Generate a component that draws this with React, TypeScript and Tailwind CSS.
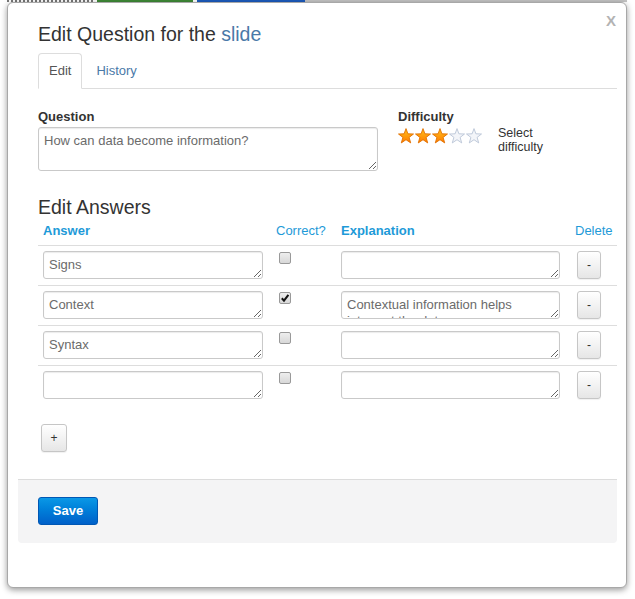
import { useState } from "react";

const answers = [
  { answer: "Signs", correct: false, explanation: "" },
  { answer: "Context", correct: true, explanation: "Contextual information helps interpret the data." },
  { answer: "Syntax", correct: false, explanation: "" },
  { answer: "", correct: false, explanation: "" },
];

const starPoints =
  "8,0.6 9.9,5.8 15.5,6 11.1,9.4 12.7,14.9 8,11.7 3.3,14.9 4.9,9.4 0.5,6 6.1,5.8";

const Star = ({ filled, id }: { filled: boolean; id: number }) => (
  <svg width="16" height="16" viewBox="0 0 16 16">
    <defs>
      <linearGradient id={`star-${id}`} x1="0" y1="0" x2="0" y2="1">
        <stop offset="0" stopColor="#ffc21a" />
        <stop offset="1" stopColor="#ff7a00" />
      </linearGradient>
    </defs>
    <polygon
      points={starPoints}
      fill={filled ? `url(#star-${id})` : "#f3f5f9"}
      stroke={filled ? "#e06f00" : "#b9c4d6"}
      strokeWidth="0.9"
      strokeLinejoin="round"
    />
  </svg>
);

const Checkbox = ({ checked }: { checked: boolean }) => (
  <span className="relative block h-[12px] w-[12px] rounded-[2px] border border-[#999] bg-gradient-to-b from-[#eeeeee] to-[#d8d8d8]">
    {checked && (
      <svg className="absolute left-0 top-0" width="10" height="10" viewBox="0 0 10 10">
        <path d="M1.8 5.2 L4 7.6 L8.4 1.9" fill="none" stroke="#111" strokeWidth="2" />
      </svg>
    )}
  </span>
);

const Field = ({ value, className }: { value: string; className: string }) => (
  <textarea
    readOnly
    value={value}
    className={`block resize-y overflow-hidden rounded-[3px] border border-[#c9c9c9] bg-white px-[5px] py-[5px] text-[13px] leading-[16px] text-[#6b6b6b] shadow-[inset_0_1px_1px_rgba(0,0,0,0.08)] outline-none ${className}`}
  />
);

const SmallButton = ({ label, className }: { label: string; className: string }) => (
  <button className={`flex items-center justify-center rounded-[3px] border border-[#c6c6c6] bg-gradient-to-b from-white to-[#e6e6e6] text-[12px] text-[#333] shadow-[0_1px_1px_rgba(0,0,0,0.06)] ${className}`}>
    {label}
  </button>
);

export default function App() {
  const [tab, setTab] = useState("edit");
  const [rating] = useState(3);

  return (
    <div className="min-h-[599px] bg-white font-['Liberation_Sans',Arial,sans-serif] text-[13px] text-[#333]">
      {/* page behind the modal */}
      <div className="flex h-[2px] pl-[7px]">
        <div className="w-[86px] border-t-2 border-dotted border-[#777]" />
        <div className="ml-[4px] w-[96px] bg-[#3f8a38]" />
        <div className="ml-[4px] w-[108px] bg-[#1c5bbd]" />
        <div className="w-[322px] bg-[#c4c4c4]" />
      </div>

      <div className="relative ml-[7px] h-[586px] w-[620px] rounded-[6px] border border-[#a8a8a8] bg-white pl-[10px] pr-[9px] shadow-[0_2px_6px_rgba(0,0,0,0.4)]">
        <span className="absolute right-[10px] top-[10px] text-[15px] font-bold leading-[16px] text-[#b3b3b3]">X</span>

        <div className="pl-[20px] pt-[19px]">
          <h2 className="text-[19.5px] leading-[24px] text-[#333]">
            Edit Question for the <span className="text-[#4a79a8]">slide</span>
          </h2>

          <div className="mt-[7px] flex h-[36px] border-b border-[#dddddd]">
            <button
              onClick={() => setTab("edit")}
              className={`-mb-px h-[36px] rounded-t-[4px] border px-[10px] text-[13px] ${
                tab === "edit" ? "border-[#dddddd] border-b-white bg-white text-[#555]" : "border-transparent text-[#4a79a8]"
              }`}
            >
              Edit
            </button>
            <button
              onClick={() => setTab("history")}
              className={`-mb-px h-[36px] rounded-t-[4px] border px-[13px] text-[13px] ${
                tab === "history" ? "border-[#dddddd] border-b-white bg-white text-[#555]" : "border-transparent text-[#4a79a8]"
              }`}
            >
              History
            </button>
          </div>

          <div className="mt-[19px] flex">
            <div className="w-[340px]">
              <label className="block font-bold leading-[18px]">Question</label>
              <Field value="How can data become information?" className="mt-[1px] h-[44px] w-[340px]" />
            </div>
            <div className="ml-[20px]">
              <label className="block font-bold leading-[18px]">Difficulty</label>
              <div className="flex items-start">
                <div className="mt-[2px] flex gap-[1px]">
                  {[1, 2, 3, 4, 5].map((n) => (
                    <Star key={n} id={n} filled={n <= rating} />
                  ))}
                </div>
                <span className="ml-[16px] w-[60px] text-[12.5px] leading-[14px] text-[#333]">Select difficulty</span>
              </div>
            </div>
          </div>

          <h3 className="mt-[24px] text-[19.5px] leading-[24px] text-[#333]">Edit Answers</h3>

          <div className="grid grid-cols-[233px_65px_234px_1fr] border-b border-[#dddddd] text-[13px] leading-[18px] text-[#1e9ad8]">
            <div className="pb-[5px] pl-[5px] pt-[3px] font-bold">Answer</div>
            <div className="pb-[5px] pl-[5px] pt-[3px]">Correct?</div>
            <div className="pb-[5px] pl-[5px] pt-[3px] font-bold">Explanation</div>
            <div className="pb-[5px] pl-[5px] pt-[3px]">Delete</div>
          </div>

          {answers.map((a, i) => (
            <div
              key={i}
              className={`grid h-[40px] grid-cols-[233px_65px_234px_1fr] ${
                i < answers.length - 1 ? "border-b border-[#dddddd]" : "h-[39px]"
              }`}
            >
              <div className="pl-[5px] pt-[5px]">
                <Field value={a.answer} className="h-[28px] w-[220px]" />
              </div>
              <div className="pl-[8px] pt-[6px]">
                <Checkbox checked={a.correct} />
              </div>
              <div className="pl-[5px] pt-[5px]">
                <Field value={a.explanation} className="h-[28px] w-[219px]" />
              </div>
              <div className="pl-[7px] pt-[5px]">
                <SmallButton label="-" className="h-[28px] w-[24px]" />
              </div>
            </div>
          ))}

          <SmallButton label="+" className="ml-[3px] mt-[18px] h-[28px] w-[26px]" />
        </div>

        <div className="mt-[27px] rounded-b-[4px] border-t border-[#dcdcdc] bg-[#f4f4f5] pb-[18px] pl-[20px] pt-[17px]">
          <button className="h-[28px] w-[60px] rounded-[3px] border border-[#0057b4] bg-gradient-to-b from-[#0b98e6] to-[#0060c9] text-[13px] font-bold text-white">
            Save
          </button>
        </div>
      </div>
    </div>
  );
}
